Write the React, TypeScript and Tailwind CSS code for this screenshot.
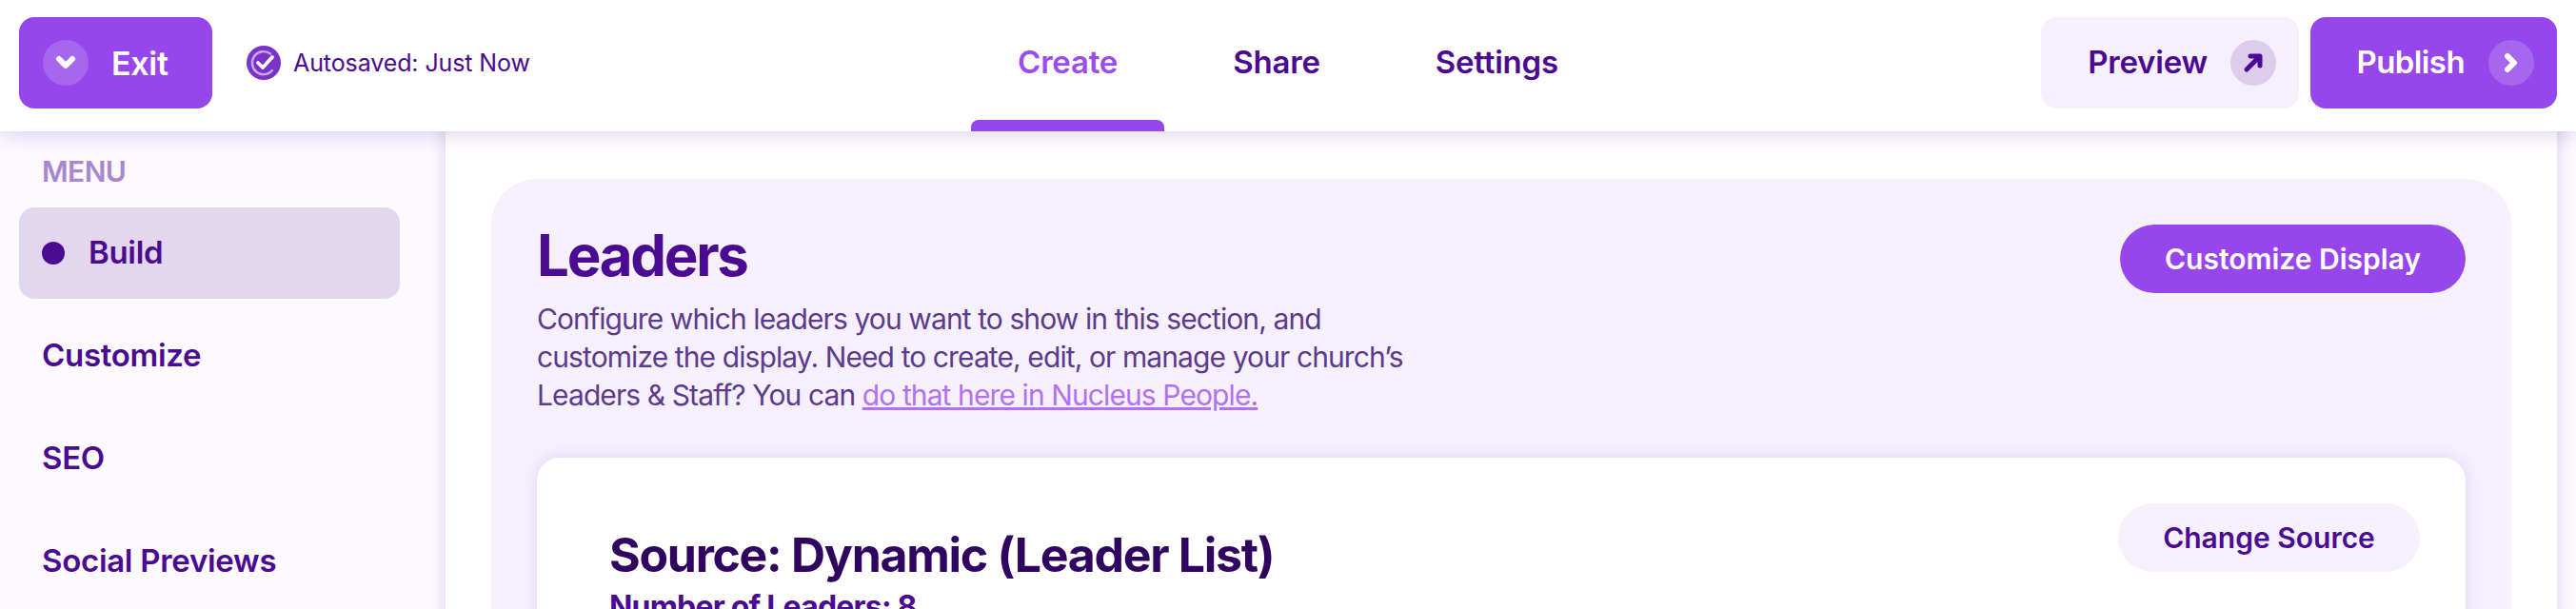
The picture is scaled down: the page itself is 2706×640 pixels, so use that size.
export default function App() {
  const font = { fontFamily: '"Inter", "Noto Sans", sans-serif' };
  return (
    <div style={font} className="h-[640px] w-[2706px] overflow-hidden bg-white flex flex-col text-[#4a0a91]">
      <header className="relative z-20 h-[138px] shrink-0 bg-white flex items-start px-5 shadow-[0_2px_22px_rgba(74,10,145,0.2)]">
        <div className="flex-1 flex items-center pt-[18px]">
          <button className="w-[203px] h-24 rounded-2xl bg-[#9646eb] flex items-center pl-[25px] text-white text-[34px] font-semibold tracking-[-0.3px]">
            <span className="w-12 h-12 rounded-full bg-[#a666ee] flex items-center justify-center mr-[24px]">
              <svg width="22" height="16" viewBox="0 0 22 16" fill="none"><path d="M4 4l7 7 7-7" stroke="white" strokeWidth="6" strokeLinecap="round" strokeLinejoin="round" /></svg>
            </span>
            Exit
          </button>
          <svg className="ml-9" width="36" height="36" viewBox="0 0 36 36" fill="none">
            <circle cx="18" cy="18" r="18" fill="#7a33c9" />
            <path d="M25 8.5A12 12 0 1 0 27 26" stroke="#c9a6f0" strokeWidth="2.4" strokeLinecap="round" />
            <path d="M12 18l5 5 10-11" stroke="white" strokeWidth="3.8" strokeLinecap="round" strokeLinejoin="round" />
          </svg>
          <span className="ml-[13px] text-[25px] tracking-[-0.1px] leading-none">Autosaved: Just Now</span>
        </div>
        <nav className="flex gap-[23px] h-full text-[33px] font-semibold tracking-[-0.2px]">
          <a className="relative px-[49px] pb-[6px] flex items-center text-[#9a4cf0]">
            Create
            <span className="absolute left-0 right-0 bottom-0 h-3 bg-[#9646eb] rounded-t-lg" />
          </a>
          <a className="px-[49px] pb-[6px] flex items-center">Share</a>
          <a className="px-[49px] pb-[6px] flex items-center">Settings</a>
        </nav>
        <div className="flex-1 flex items-center justify-end gap-3 pt-[18px] text-[33px] font-semibold tracking-[-0.2px]">
          <button className="w-[271px] h-24 rounded-2xl bg-[#f6f0fd] flex items-center justify-end pr-6">
            Preview
            <span className="ml-6 w-12 h-12 rounded-full bg-[#dccdec] flex items-center justify-center">
              <svg width="24" height="24" viewBox="0 0 24 24" fill="none"><path d="M5 19 18 6M9 5h10v10" stroke="#4a0a91" strokeWidth="5" strokeLinecap="round" strokeLinejoin="round" /></svg>
            </span>
          </button>
          <button className="w-[259px] h-24 rounded-2xl bg-[#9646eb] flex items-center justify-end pr-6 text-white tracking-[-0.6px]">
            Publish
            <span className="ml-[25px] w-12 h-12 rounded-full bg-[#a666ee] flex items-center justify-center">
              <svg width="16" height="22" viewBox="0 0 16 22" fill="none"><path d="M4 4l7 7-7 7" stroke="white" strokeWidth="6" strokeLinecap="round" strokeLinejoin="round" /></svg>
            </span>
          </button>
        </div>
      </header>
      <div className="flex flex-1 min-h-0">
        <aside className="w-[468px] shrink-0 bg-[#fcfaff] shadow-[inset_-14px_0_14px_-10px_rgba(74,10,145,0.12)] pl-5 pr-12 pt-[26px]">
          <div className="pl-6 text-[30px] leading-[32px] font-semibold text-[#a987cf] tracking-[-0.6px]">MENU</div>
          <ul className="mt-[22px] flex flex-col gap-3 text-[33px] font-semibold tracking-[-0.3px]">
            <li className="h-24 rounded-2xl bg-[#e3d6ef] flex items-center pl-6">
              <span className="w-6 h-6 rounded-full bg-[#4a0a91] mr-[25px]" />
              Build
            </li>
            <li className="h-24 flex items-center pl-6">Customize</li>
            <li className="h-24 flex items-center pl-6">SEO</li>
            <li className="h-24 flex items-center pl-6">Social Previews</li>
          </ul>
        </aside>
        <main className="flex-1 min-w-0 px-12 pt-[50px]">
          <section className="rounded-[48px] bg-[#f6f0fd] px-12 pt-12 h-[600px]">
            <div className="flex justify-between items-start">
              <div>
                <h1 className="text-[60px] leading-[64px] font-bold tracking-[-2.3px]">Leaders</h1>
                <p className="mt-[15px] w-[930px] text-[30px] leading-10 text-[#5c3a8e] tracking-[-0.9px]">
                  Configure which leaders you want to show in this section, and customize the display. Need to create, edit, or manage your church’s Leaders &amp; Staff? You can <a className="underline text-[#b072f0]">do that here in Nucleus People.</a>
                </p>
              </div>
              <button className="w-[363px] h-[72px] rounded-full bg-[#9646eb] text-white text-[30px] font-semibold">Customize Display</button>
            </div>
            <div className="mt-[46px] h-[400px] rounded-3xl bg-white shadow-[0_0_16px_rgba(74,10,145,0.12)] pl-[76px] pr-12 pt-12 flex justify-between items-start">
              <div>
                <h2 className="text-[50px] leading-[60px] font-bold text-[#2f0560] tracking-[-1.3px] mt-6">Source: Dynamic (Leader List)</h2>
                <div className="text-[32px] leading-9 font-bold tracking-[-0.8px] mt-[7px]">Number of Leaders: 8</div>
              </div>
              <button className="w-[317px] h-[72px] rounded-full bg-[#f6f0fd] text-[30px] font-semibold">Change Source</button>
            </div>
          </section>
        </main>
        <div className="w-5 shrink-0 bg-[#fcfaff] shadow-[inset_14px_0_14px_-10px_rgba(74,10,145,0.12)]" />
      </div>
    </div>
  );
}
